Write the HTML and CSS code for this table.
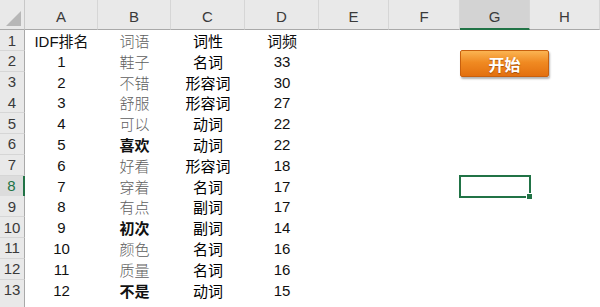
FILE: index.html
```html
<!DOCTYPE html>
<html lang="zh-CN">

<head>
  <meta charset="UTF-8">
  <title>词频统计</title>
  <link rel="stylesheet" href="styles.css">
</head>

<body>
  <div class="sheet">
    <div class="row head">
      <div class="corner"></div>
      <div class="col">A</div>
      <div class="col">B</div>
      <div class="col">C</div>
      <div class="col">D</div>
      <div class="col">E</div>
      <div class="col">F</div>
      <div class="col active">G</div>
      <div class="col">H</div>
    </div>

    <div class="row">
      <div class="num">1</div>
      <div class="cell">IDF排名</div>
      <div class="cell word">词语</div>
      <div class="cell pos">词性</div>
      <div class="cell">词频</div>
      <div></div><div></div><div></div><div></div>
    </div>
    <div class="row">
      <div class="num">2</div>
      <div class="cell val">1</div>
      <div class="cell word">鞋子</div>
      <div class="cell pos">名词</div>
      <div class="cell val">33</div>
      <div></div><div></div><div></div><div></div>
    </div>
    <div class="row">
      <div class="num">3</div>
      <div class="cell val">2</div>
      <div class="cell word">不错</div>
      <div class="cell pos">形容词</div>
      <div class="cell val">30</div>
      <div></div><div></div><div></div><div></div>
    </div>
    <div class="row">
      <div class="num">4</div>
      <div class="cell val">3</div>
      <div class="cell word">舒服</div>
      <div class="cell pos">形容词</div>
      <div class="cell val">27</div>
      <div></div><div></div><div></div><div></div>
    </div>
    <div class="row">
      <div class="num">5</div>
      <div class="cell val">4</div>
      <div class="cell word">可以</div>
      <div class="cell pos">动词</div>
      <div class="cell val">22</div>
      <div></div><div></div><div></div><div></div>
    </div>
    <div class="row">
      <div class="num">6</div>
      <div class="cell val">5</div>
      <div class="cell word strong">喜欢</div>
      <div class="cell pos">动词</div>
      <div class="cell val">22</div>
      <div></div><div></div><div></div><div></div>
    </div>
    <div class="row">
      <div class="num">7</div>
      <div class="cell val">6</div>
      <div class="cell word">好看</div>
      <div class="cell pos">形容词</div>
      <div class="cell val">18</div>
      <div></div><div></div><div></div><div></div>
    </div>
    <div class="row">
      <div class="num active">8</div>
      <div class="cell val">7</div>
      <div class="cell word">穿着</div>
      <div class="cell pos">名词</div>
      <div class="cell val">17</div>
      <div></div><div></div><div></div><div></div>
    </div>
    <div class="row">
      <div class="num">9</div>
      <div class="cell val">8</div>
      <div class="cell word">有点</div>
      <div class="cell pos">副词</div>
      <div class="cell val">17</div>
      <div></div><div></div><div></div><div></div>
    </div>
    <div class="row">
      <div class="num">10</div>
      <div class="cell val">9</div>
      <div class="cell word strong">初次</div>
      <div class="cell pos">副词</div>
      <div class="cell val">14</div>
      <div></div><div></div><div></div><div></div>
    </div>
    <div class="row">
      <div class="num">11</div>
      <div class="cell val">10</div>
      <div class="cell word">颜色</div>
      <div class="cell pos">名词</div>
      <div class="cell val">16</div>
      <div></div><div></div><div></div><div></div>
    </div>
    <div class="row">
      <div class="num">12</div>
      <div class="cell val">11</div>
      <div class="cell word">质量</div>
      <div class="cell pos">名词</div>
      <div class="cell val">16</div>
      <div></div><div></div><div></div><div></div>
    </div>
    <div class="row">
      <div class="num">13</div>
      <div class="cell val">12</div>
      <div class="cell word strong">不是</div>
      <div class="cell pos">动词</div>
      <div class="cell val">15</div>
      <div></div><div></div><div></div><div></div>
    </div>
    <!-- next row only peeks in at the bottom edge -->
    <div class="row">
      <div class="num"></div>
      <div></div><div></div><div></div><div></div>
      <div></div><div></div><div></div><div></div>
    </div>

    <!-- floating macro button and the selected cell G8 -->
    <button class="start">开始</button>
    <div class="selection"><span class="handle"></span></div>
  </div>
</body>

</html>
```

FILE: styles.css
```css
body {
  margin: 0;
  background: #fff;
  font-family: "Liberation Sans", "Noto Sans CJK SC", sans-serif;
  overflow: hidden;
}

.sheet {
  position: relative;
  width: 600px;
  height: 307px;
  overflow: hidden;
}

.row {
  display: grid;
  grid-template-columns: 25px 73px 73px 74px 74px 70px 71px 70px 70px;
  height: 20.8px;
}

.row.head {
  height: 30px;
}

/* column letters */
.corner,
.col {
  background: #e9e9e9;
  border-bottom: 1px solid #a9a9a9;
  box-sizing: border-box;
}

.corner {
  position: relative;
  border-right: 1px solid #c8c8c8;
}

.corner::after {
  content: "";
  position: absolute;
  right: 3px;
  bottom: 3px;
  border-left: 15px solid transparent;
  border-bottom: 15px solid #b7b7b7;
}

.col {
  display: flex;
  align-items: flex-end;
  justify-content: center;
  padding-bottom: 4px;
  border-right: 1px solid #d6d6d6;
  font-size: 15px;
  color: #3a3a3a;
}

.col.active {
  background: #d3d3d3;
  border-bottom: 2px solid #217346;
  padding-bottom: 3px;
}

/* row numbers */
.num {
  display: flex;
  align-items: center;
  justify-content: center;
  background: #e9e9e9;
  border-right: 1px solid #a9a9a9;
  border-bottom: 1px solid #d6d6d6;
  box-sizing: border-box;
  font-size: 15px;
  color: #3a3a3a;
}

.num.active {
  background: #dcdcdc;
  color: #217346;
  border-right: 2px solid #217346;
}

.cell {
  display: flex;
  align-items: center;
  justify-content: center;
  font-size: 15px;
  color: #111;
  white-space: nowrap;
}

.val {
  font-family: "Liberation Sans", sans-serif;
}

.word {
  color: #5e5e5e;
  font-weight: 300;
}

.word.strong {
  color: #111;
  font-weight: 700;
}

.pos {
  font-weight: 400;
  color: #000;
}

.start {
  position: absolute;
  left: 460px;
  top: 50px;
  width: 89px;
  height: 27px;
  padding: 0;
  border: 1px solid #c8600e;
  border-radius: 2px;
  background: linear-gradient(#fbb452, #f08a22 45%, #e3700f);
  box-shadow: 1px 2px 2px rgba(0, 0, 0, 0.3);
  color: #fff;
  font-family: "Noto Sans CJK SC", sans-serif;
  font-size: 16px;
  font-weight: 700;
  text-shadow: 0 1px 1px rgba(120, 50, 0, 0.6);
}

.selection {
  position: absolute;
  left: 459px;
  top: 175px;
  width: 72px;
  height: 23px;
  border: 2px solid #217346;
  box-sizing: border-box;
}

.handle {
  position: absolute;
  right: -4px;
  bottom: -4px;
  width: 5px;
  height: 5px;
  background: #217346;
  border: 1px solid #fff;
}
```
